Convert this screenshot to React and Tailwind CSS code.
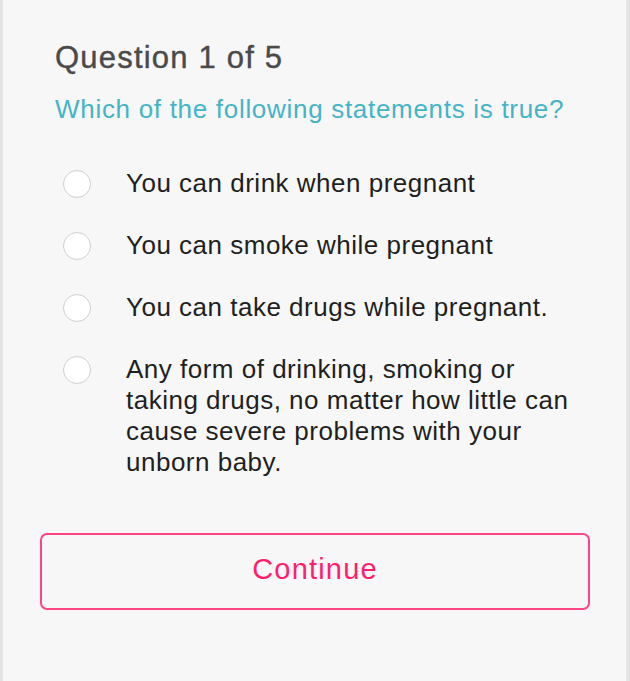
export default function App() {
  const options = [
    ["You can drink when pregnant"],
    ["You can smoke while pregnant"],
    ["You can take drugs while pregnant."],
    [
      "Any form of drinking, smoking or",
      "taking drugs, no matter how little can",
      "cause severe problems with your",
      "unborn baby.",
    ],
  ];
  return (
    <div
      className="box-border h-[681px] w-full overflow-hidden border-l-[3px] border-r-[4px] border-[#e4e4e4] bg-[#f7f7f7] pt-[43px]"
      style={{ fontFamily: '"Liberation Sans", Arial, sans-serif' }}
    >
      <div className="pl-[52px]">
        <h1 className="text-[31px] leading-[30px] tracking-[1.2px] text-[#4a4a4a] [-webkit-text-stroke:0.4px_#4a4a4a]">
          Question 1 of 5
        </h1>
        <p className="mt-[24px] text-[26px] leading-[25px] tracking-[0.7px] text-[#45b4c6]">
          Which of the following statements is true?
        </p>
      </div>
      <div className="mt-[46px] flex flex-col gap-[31px] pl-[60px]">
        {options.map((lines, i) => (
          <label key={i} className="flex items-start">
            <span className="mt-[1.5px] box-border h-[28px] w-[28px] shrink-0 rounded-full border-[1.5px] border-[#cfcfcf] bg-white" />
            <span className="ml-[35px] text-[26px] leading-[31px] tracking-[0.5px] text-[#1f1f1f]">
              {lines.map((l, j) => (
                <span key={j} className="block whitespace-nowrap">
                  {l}
                </span>
              ))}
            </span>
          </label>
        ))}
      </div>
      <div className="ml-[37px] mr-[36px] mt-[55px]">
        <button className="box-border w-full rounded-[7px] border-2 border-[#ff4684] bg-transparent pb-[25px] pt-[20px] text-center text-[29px] leading-[28px] tracking-[1.2px] text-[#ff1f6e]">
          Continue
        </button>
      </div>
    </div>
  );
}
